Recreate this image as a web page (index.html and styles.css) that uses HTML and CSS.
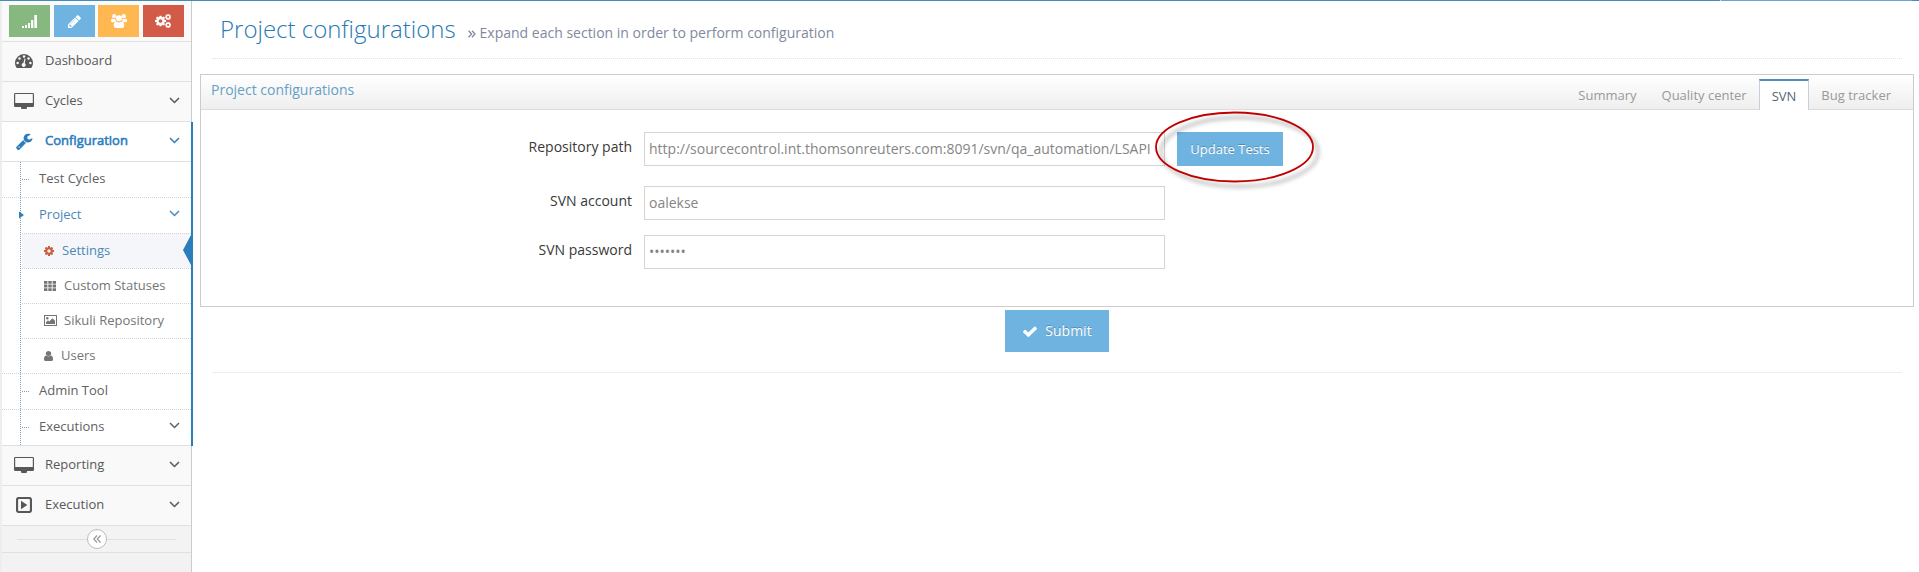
FILE: index.html
```html
<!DOCTYPE html>
<html lang="en">
<head>
<meta charset="utf-8">
<title>Project configurations</title>
<link rel="stylesheet" href="styles.css">
</head>
<body>
<svg class="sprite" aria-hidden="true">
  <symbol id="chevron" viewBox="0 0 11 7"><path d="M1 1l4.500 4.500L10 1" fill="none" stroke="currentColor" stroke-width="1.500"/></symbol>
  <symbol id="cog" viewBox="128 128 1536 1536"><path d="M1152 896q0-106-75-181t-181-75-181 75-75 181 75 181 181 75 181-75 75-181zm512-109v222q0 12-8 23t-20 13l-185 28q-19 54-39 91 35 50 107 138 10 12 10 25t-9 23q-27 37-99 108t-94 71q-12 0-26-9l-138-108q-44 23-91 38-16 136-29 186-7 28-36 28h-222q-14 0-24.5-8.5t-11.5-21.5l-28-184q-49-16-90-37l-141 107q-10 9-25 9-14 0-25-11-126-114-165-168-7-10-7-23 0-12 8-23 15-21 51-66.5t54-70.5q-27-50-41-99l-183-27q-13-2-21-12.5t-8-23.5v-222q0-12 8-23t19-13l186-28q14-46 39-92-40-57-107-138-10-12-10-24 0-10 9-23 26-36 98.5-107.5t94.5-71.5q13 0 26 10l138 107q44-23 91-38 16-136 29-186 7-28 36-28h222q14 0 24.5 8.5t11.5 21.5l28 184q49 16 90 37l142-107q9-9 24-9 13 0 25 10 129 119 165 170 7 8 7 22 0 12-8 23-15 21-51 66.5t-54 70.5q26 50 41 98l183 28q13 2 21 12.5t8 23.5z"/></symbol>
  <symbol id="desktop" viewBox="0 0 20 16"><path fill-rule="evenodd" d="M1.300 0h17.400q1.300 0 1.300 1.300v11.400q0 1.300-1.300 1.300H13v1q0 1-1 1H8q-1 0-1-1v-1H1.300Q0 14 0 12.700V1.300Q0 0 1.300 0zM1.200 1v9h17.600V1z"/></symbol>
</svg>
<div class="topbar"><span class="topbar-light"></span></div>
<div class="page">
  <aside class="sidebar">
    <div class="shortcuts">
      <a class="sc green"><svg width="15" height="13" viewBox="0 0 15 13"><path d="M0 11h2v2H0zM3 10h2v3H3zM6 8h2v5H6zM9 5h2.300v8H9zM12.300 0H15v13h-2.700z"/></svg></a>
      <a class="sc blue"><svg width="13" height="13" viewBox="128 128 1536 1536"><path d="M491 1536l91-91-235-235-91 91v107h128v128h107zm523-928q0-22-22-22-10 0-17 7l-542 542q-7 7-7 17 0 22 22 22 10 0 17-7l542-542q7-7 7-17zm-54-192l416 416-832 832h-416v-416zm683 96q0 53-37 90l-166 166-416-416 166-165q36-38 90-38 53 0 91 38l235 234q37 39 37 91z"/></svg></a>
      <a class="sc orange"><svg width="16" height="14" viewBox="0 0 16 14"><circle cx="3.200" cy="2.200" r="2.100"/><circle cx="12.800" cy="2.200" r="2.100"/><circle cx="8" cy="4.300" r="3"/><path d="M1.300 4.500q2 1 3 .3 0 1.600.9 2.500-1.500 0-2.300 1H1.500Q0 8.300 0 7q0-2.300 1.300-2.500zM14.700 4.500q-2 1-3 .3 0 1.600-.9 2.500 1.500 0 2.300 1h1.400Q16 8.300 16 7q0-2.300-1.300-2.500zM5.300 7.600q2.700 1.700 5.400 0 2.600 0 2.600 4 0 2.400-2 2.400H4.700q-2 0-2-2.400 0-4 2.600-4z"/></svg></a>
      <a class="sc red"><svg width="16" height="14" viewBox="0 0 16 14"><use href="#cog" x="0" y="1.500" width="11" height="11"/><use href="#cog" x="10" y="0" width="6.200" height="6.200"/><use href="#cog" x="10" y="7.800" width="6.200" height="6.200"/></svg></a>
    </div>
    <a class="item"><span class="ico"><svg width="18" height="14" viewBox="0 0 18 14"><path d="M9 0a9 9 0 0 1 9 9q0 2.600-1.300 4.600-.2.400-.7.400H2q-.5 0-.7-.4Q0 11.600 0 9a9 9 0 0 1 9-9z"/><g fill="#f9f9f9"><circle cx="2.600" cy="9" r="1.250"/><circle cx="4.500" cy="4.500" r="1.250"/><circle cx="9" cy="2.600" r="1.250"/><circle cx="13.500" cy="4.500" r="1.250"/><circle cx="15.400" cy="9" r="1.250"/><path d="M9.500 4.600l1 .2-.7 4.500a2 2 0 1 1-1.400-.3z"/></g></svg></span><span class="label">Dashboard</span></a>
    <a class="item"><span class="ico"><svg width="20" height="16"><use href="#desktop"/></svg></span><span class="label">Cycles</span><svg class="chev"><use href="#chevron"/></svg></a>
    <div class="open">
      <a class="item current"><span class="ico"><svg width="17" height="17" viewBox="85 60 1680 1710"><path d="M448 1472q0-26-19-45t-45-19-45 19-19 45 19 45 45 19 45-19 19-45zm644-420l-682 682q-37 37-90 37-52 0-91-37l-106-108q-38-36-38-90 0-53 38-91l681-681q39 98 114.500 173.500t173.500 114.500zm634-435q0 39-23 106-47 134-164.500 217.500t-258.500 83.500q-185 0-316.500-131.500t-131.500-316.500 131.500-316.500 316.500-131.500q58 0 121.500 16.500t107.500 46.500q16 11 16 28t-16 28l-293 169v224l193 107q5-3 79-48.500t135.500-81 70.500-35.500q15 0 23.500 10t8.500 25z"/></svg></span><span class="label">Configuration</span><svg class="chev"><use href="#chevron"/></svg></a>
      <div class="submenu">
        <a class="sub tick">Test Cycles</a>
        <a class="sub active">Project<svg class="chev"><use href="#chevron"/></svg></a>
        <div class="third">
          <a class="leaf selected"><svg class="cog" width="10" height="10"><use href="#cog"/></svg><span>Settings</span></a>
          <a class="leaf"><svg width="12" height="10" viewBox="0 0 12 10"><path d="M0 0h3.400v2.700H0zM4.300 0h3.400v2.700H4.300zM8.600 0H12v2.700H8.600zM0 3.600h3.400v2.800H0zM4.300 3.600h3.400v2.800H4.300zM8.600 3.600H12v2.800H8.600zM0 7.300h3.400V10H0zM4.300 7.300h3.400V10H4.300zM8.600 7.300H12V10H8.600z"/></svg><span>Custom Statuses</span></a>
          <a class="leaf"><svg width="13" height="11" viewBox="0 0 13 11"><path fill-rule="evenodd" d="M0 0h13v11H0zM1 1v9h11V1zM2 9V7.300l2-2L5.200 6.500 8.500 3.200 11 5.700V9z"/><circle cx="3.300" cy="3.200" r="1.200"/></svg><span class="far">Sikuli Repository</span></a>
          <a class="leaf"><svg width="9" height="10" viewBox="256 128 1280 1536" preserveAspectRatio="none"><path d="M1536 1399q0 109-62.500 187t-150.500 78h-854q-88 0-150.500-78t-62.500-187q0-85 8.500-160.500t31.500-152 58.500-131 94-89 134.500-34.500q131 128 313 128t313-128q76 0 134.500 34.500t94 89 58.500 131 31.500 152 8.500 160.500zm-256-887q0 159-112.500 271.500t-271.500 112.500-271.500-112.500-112.500-271.500 112.500-271.500 271.500-112.500 271.500 112.500 112.500 271.500z"/></svg><span>Users</span></a>
        </div>
        <a class="sub tick first">Admin Tool</a>
        <a class="sub tick last">Executions<svg class="chev"><use href="#chevron"/></svg></a>
      </div>
    </div>
    <a class="item"><span class="ico"><svg width="20" height="16"><use href="#desktop"/></svg></span><span class="label">Reporting</span><svg class="chev"><use href="#chevron"/></svg></a>
    <a class="item"><span class="ico"><svg width="16" height="16" viewBox="0 0 16 16"><rect x="1" y="1" width="14" height="14" rx="2" fill="none" stroke="currentColor" stroke-width="2.200"/><path d="M5 3.800L11.300 8 5 12.200z"/></svg></span><span class="label">Execution</span><svg class="chev"><use href="#chevron"/></svg></a>
    <div class="collapse"><span class="knob"><svg width="8" height="8" viewBox="0 0 8 8"><path d="M4 .5L.8 4 4 7.500M7.500.5L4.300 4l3.200 3.500" fill="none" stroke="#999" stroke-width="1.200"/></svg></span></div>
  </aside>
  <main class="content">
    <header class="page-header">
      <h1>Project configurations</h1>
      <svg class="raquo" width="8" height="8" viewBox="0 0 8 8"><path d="M.6.700L3.600 4 .6 7.300M4 .7L7 4 4 7.300" fill="none" stroke="#8089a0" stroke-width="1.300"/></svg>
      <small>Expand each section in order to perform configuration</small>
    </header>
    <section class="widget">
      <div class="widget-header">
        <h5>Project configurations</h5>
        <nav class="tabs"><a>Summary</a><a>Quality center</a><a class="on">SVN</a><a class="after">Bug tracker</a></nav>
      </div>
      <form class="form">
        <div class="row first-row"><label>Repository path</label><div class="input">http://sourcecontrol.int.thomsonreuters.com:8091/svn/qa_automation/LSAPI</div>
          <div class="marked"><a class="btn">Update Tests</a>
            <svg class="ring" width="180" height="90" viewBox="0 0 180 90"><ellipse cx="85.500" cy="42" rx="78.500" ry="34.500"/></svg>
          </div>
        </div>
        <div class="row"><label>SVN account</label><div class="input">oalekse</div></div>
        <div class="row"><label>SVN password</label><div class="input dots">•••••••</div></div>
      </form>
    </section>
    <div class="actions"><a class="btn submit"><svg width="14" height="11" viewBox="121 270 1550 1252" preserveAspectRatio="none"><path d="M1671 566q0 40-28 68l-724 724-136 136q-28 28-68 28t-68-28l-136-136-362-362q-28-28-28-68t28-68l136-136q28-28 68-28t68 28l294 295 656-657q28-28 68-28t68 28l136 136q28 28 28 68z"/></svg>Submit</a></div>
    <hr>
  </main>
</div>
</body>
</html>
```
FILE: styles.css
```css
* { box-sizing: border-box; }
body { margin: 0; height: 572px; overflow: hidden; background: #fff; font: 13px/20px "Open Sans", "Noto Sans", sans-serif; color: #393939; }
svg { display: block; fill: currentColor; flex: none; }
.sprite { position: absolute; width: 0; height: 0; }
.topbar { height: 1px; background: #438eb9; display: flex; justify-content: flex-end; padding-right: 7px; }
.topbar-light { width: 192px; background: #62a8d1; border-left: 1px solid #ddd; }
.page { display: flex; height: 571px; }

.sidebar { width: 192px; flex: none; background: #f2f2f2; border-left: 2px solid #eee; border-right: 1px solid #ccc; }
.shortcuts { height: 41px; padding: 4px 7px 0; background: #fafafa; border-bottom: 1px solid #e0e0e0; display: flex; justify-content: space-between; }
.sc { width: 41px; height: 32px; display: flex; align-items: center; justify-content: center; color: #fff; }
.green { background: #87b87f; }
.blue { background: #6fb3e0; }
.orange { background: #ffb752; }
.red { background: #d15b47; }
.item { height: 40px; display: flex; align-items: center; background: #f9f9f9; border-bottom: 1px solid #e0e0e0; color: #585858; padding: 0 11px 1px 7px; }
.ico { width: 30px; display: flex; justify-content: center; margin-right: 6px; }
.label { flex: 1; padding-bottom: 2px; }
.chev { width: 11px; height: 7px; margin-bottom: 1px; }
.open { margin-right: -2px; border-right: 2px solid #2b7dbc; background: #fff; }
.item.current { background: #fff; color: #2b7dbc; }
.current .label { -webkit-text-stroke: .55px currentColor; }
.submenu { position: relative; height: 284px; border-bottom: 1px solid #e0e0e0; color: #616161; }
.submenu::before { content: ""; position: absolute; left: 18px; top: 0; bottom: 0; border-left: 1px dotted #7a9fbd; z-index: 1; }
.sub { position: relative; height: 36px; padding: 0 11px 3px 37px; display: flex; align-items: center; justify-content: space-between; border-bottom: 1px dotted #d4d4d4; }
.sub.last { border-bottom: 0; padding-bottom: 4px; }
.sub.tick::before { content: ""; position: absolute; left: 20px; top: 17px; width: 7px; border-top: 1px dotted #7a9fbd; }
.sub.active { color: #4b88b7; border-bottom: 0; height: 35px; }
.sub.active::before { content: ""; position: absolute; left: 17px; top: 10px; width: 5px; height: 14px; z-index: 2; background: #2b7dbc; clip-path: polygon(0 25%, 100% 50%, 0 75%); }
.sub.first { border-top: 1px dotted #d4d4d4; height: 37px; }
.third { padding-left: 20px; color: #757575; }
.leaf { position: relative; height: 35px; padding: 0 0 1px 22px; display: flex; align-items: center; border-top: 1px dotted #d4d4d4; }
.leaf span { margin: 0 0 1px 8px; }
.leaf .far { margin-left: 7px; }
.leaf.selected { background: #f5f6fa; color: #4b88b7; }
.cog { color: #c95d3c; }
.selected::after { content: ""; position: absolute; right: 0; top: 1px; width: 8px; height: 30px; background: #2b7dbc; clip-path: polygon(100% 0, 0 50%, 100% 100%); }
.collapse { height: 27px; border-bottom: 1px solid #e0e0e0; background: linear-gradient(#e0e0e0, #e0e0e0) 15px 13px / 159px 1px no-repeat #f3f3f3; display: flex; justify-content: center; align-items: center; }
.knob { width: 20px; height: 20px; border: 1px solid #bbb; border-radius: 50%; background: #fff; display: flex; align-items: center; justify-content: center; }

.content { flex: 1; padding: 0 5px 0 8px; }
.page-header { height: 58px; margin: 0 12px; padding: 5px 0 0 8px; display: flex; align-items: baseline; border-bottom: 1px dotted #e2e2e2; }
.page-header h1 { margin: 0; font-size: 24px; line-height: 46px; font-weight: 300; color: #2679b5; }
.raquo { margin: 0 4px 0 12px; }
.page-header small { font-size: 14px; color: #8089a0; }
.widget { margin-top: 15px; height: 233px; border: 1px solid #ccc; }
.widget-header { height: 35px; display: flex; justify-content: space-between; border-bottom: 1px solid #ddd; background: linear-gradient(#fff, #eee); padding: 0 9px 0 10px; }
.widget-header h5 { margin: 0; font-size: 14px; line-height: 29px; font-weight: 400; color: #669fc7; }
.tabs { display: flex; padding-top: 4px; color: #999; }
.tabs a { height: 30px; line-height: 32px; padding: 0 12px 0 13px; }
.tabs .on { height: 31px; line-height: 30px; padding: 0 12px; background: #fff; border: 1px solid #c5d0dc; border-top: 2px solid #4c8fbd; border-bottom: 0; color: #576373; }
.tabs .after { padding: 0 13px 0 12px; }
.form { padding-top: 22px; font-size: 14px; }
.row { display: flex; height: 34px; margin-bottom: 15px; }
.first-row { margin-bottom: 20px; }
.row label { width: 431px; padding: 5px 0 0; text-align: right; margin-right: 12px; }
.input { width: 521px; border: 1px solid #d5d5d5; padding: 0 4px; line-height: 32px; color: #858585; white-space: nowrap; overflow: hidden; }
.marked { position: relative; margin-left: 12px; }
.btn { display: flex; align-items: center; justify-content: center; background: #6fb3e0; color: #fff; text-shadow: 0 -1px 0 rgba(0,0,0,.25); }
.marked .btn { width: 106px; height: 34px; font-size: 13px; }
.ring { position: absolute; left: -28px; top: -27px; fill: none; stroke: #c00000; stroke-width: 1.800; filter: drop-shadow(5px 5px 2px rgba(0,0,0,.4)); }
.actions { display: flex; padding: 3px 0 0 805px; }
.submit { width: 104px; height: 42px; font-size: 14px; gap: 8px; padding-left: 1px; }
hr { margin: 20px 12px 0; border: 0; border-top: 1px solid #eee; }
```
